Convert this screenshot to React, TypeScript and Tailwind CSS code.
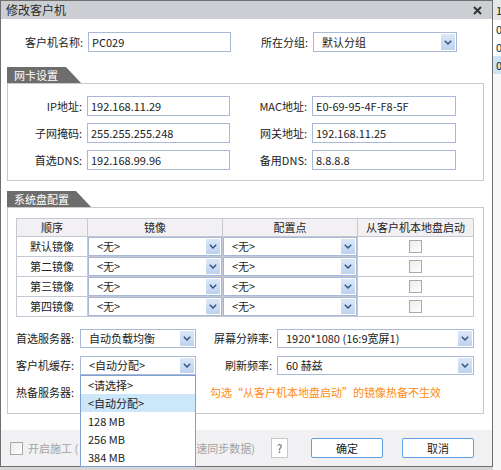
import React from 'react';

const Chevron = () => (
  <svg width="8" height="5" viewBox="0 0 8 5" className="block">
    <path d="M0.8 0.8 4 4 7.2 0.8" fill="none" stroke="#2f4f86" strokeWidth="1.4" />
  </svg>
);

const Select = ({ value, className = '' }: { value: string; className?: string }) => (
  <div className={`flex items-stretch border border-[#a7b9d6] bg-white p-px ${className}`}>
    <span className="flex flex-1 items-center truncate pl-[7px]">{value}</span>
    <span className="flex w-[14px] items-center justify-center bg-linear-to-b from-[#dbe7f6] to-[#bfd3ee]">
      <Chevron />
    </span>
  </div>
);

const Input = ({ value, className = '' }: { value: string; className?: string }) => (
  <div className={`flex h-[20px] items-center border border-[#a7b9d6] bg-white pl-[3px] ${className}`}>{value}</div>
);

const Check = () => (
  <div className="h-[13px] w-[13px] border border-[#a9a9a9] bg-linear-to-br from-[#ececec] to-white" />
);

const SectionTab = ({ title, w }: { title: string; w: string }) => (
  <div
    className={`h-[16px] ${w} bg-[#6d6d6d] pl-[7px] leading-[16px] text-white [clip-path:polygon(0_0,calc(100%-15px)_0,100%_100%,0_100%)]`}
  >
    {title}
  </div>
);

const images = ['默认镜像', '第二镜像', '第三镜像', '第四镜像'];
const cacheOptions = ['<请选择>', '<自动分配>', '128 MB', '256 MB', '384 MB'];

export default function App() {
  return (
    <div className="flex h-[470px] w-[501px] overflow-hidden bg-[#d6d6d6] font-['Noto_Sans_CJK_SC',sans-serif] text-[11px] text-[#222]">
      <div className="relative flex h-[467px] w-[493px] shrink-0 flex-col border border-[#6f6f6f] bg-white">
        {/* Title bar */}
        <div className="flex h-[18px] items-center justify-between bg-[#cbcfd4] pl-[5px] pr-[10px] text-[12px] text-[#2a2a2a]">
          <span>修改客户机</span>
          <svg width="9" height="9" viewBox="0 0 9 9">
            <path d="M1 1l7 7M8 1 1 8" stroke="#333" strokeWidth="2" />
          </svg>
        </div>

        {/* Row 1 */}
        <div className="mt-[13px] flex h-[20px] items-center">
          <span className="w-[87px] pr-[5px] text-right">客户机名称:</span>
          <Input value="PC029" className="w-[143px]" />
          <span className="w-[82px] pr-[5px] text-right">所在分组:</span>
          <Select value="默认分组" className="h-[20px] w-[144px]" />
        </div>

        {/* 网卡设置 */}
        <div className="ml-[6px] mt-[15px] w-[477px]">
          <SectionTab title="网卡设置" w="w-[74px]" />
          <div className="flex flex-col gap-[7px] border border-[#c9c9c9] pb-[10px] pt-[12px]">
            {[
              ['IP地址:', '192.168.11.29', 'MAC地址:', 'E0-69-95-4F-F8-5F'],
              ['子网掩码:', '255.255.255.248', '网关地址:', '192.168.11.25'],
              ['首选DNS:', '192.168.99.96', '备用DNS:', '8.8.8.8'],
            ].map(([l1, v1, l2, v2]) => (
              <div key={l1} className="flex h-[20px] items-center">
                <span className="w-[79px] pr-[5px] text-right">{l1}</span>
                <Input value={v1} className="w-[143px]" />
                <span className="w-[82px] pr-[5px] text-right">{l2}</span>
                <Input value={v2} className="w-[144px]" />
              </div>
            ))}
          </div>
        </div>

        {/* 系统盘配置 */}
        <div className="ml-[6px] mt-[10px] w-[477px]">
          <SectionTab title="系统盘配置" w="w-[84px]" />
          <div className="border border-[#c9c9c9] pb-[11px] pt-[10px]">
            <table className="ml-[8px] w-[457px] table-fixed border-collapse">
              <colgroup>
                <col className="w-[71px]" />
                <col className="w-[135px]" />
                <col className="w-[135px]" />
                <col className="w-[116px]" />
              </colgroup>
              <thead>
                <tr className="h-[18px] bg-[#f3f0f3]">
                  {['顺序', '镜像', '配置点', '从客户机本地盘启动'].map((h) => (
                    <th key={h} className="border border-[#c4c8d2] p-0 text-center font-normal">
                      {h}
                    </th>
                  ))}
                </tr>
              </thead>
              <tbody>
                {images.map((name) => (
                  <tr key={name} className="h-[20px]">
                    <td className="border border-[#c4c8d2] p-0 text-center">{name}</td>
                    <td className="border border-[#c4c8d2] p-0">
                      <Select value="<无>" className="h-[19px] w-full" />
                    </td>
                    <td className="border border-[#c4c8d2] p-0">
                      <Select value="<无>" className="h-[19px] w-full" />
                    </td>
                    <td className="border border-[#c4c8d2] p-0">
                      <div className="flex justify-center">
                        <Check />
                      </div>
                    </td>
                  </tr>
                ))}
              </tbody>
            </table>

            <div className="ml-[8px] mt-[12px] flex flex-col gap-[8px]">
              <div className="flex h-[19px] items-center">
                <span className="w-[64px]">首选服务器:</span>
                <Select value="自动负载均衡" className="h-[19px] w-[116px]" />
                <span className="w-[81px] pr-[5px] text-right">屏幕分辨率:</span>
                <Select value="1920*1080 (16:9宽屏1)" className="h-[19px] w-[197px]" />
              </div>
              <div className="flex h-[19px] items-center">
                <span className="w-[64px]">客户机缓存:</span>
                <Select value="<自动分配>" className="h-[19px] w-[116px]" />
                <span className="w-[81px] pr-[5px] text-right">刷新频率:</span>
                <Select value="60 赫兹" className="h-[19px] w-[197px]" />
              </div>
              <div className="flex h-[19px] items-center">
                <span className="w-[64px]">热备服务器:</span>
                <span className="ml-[130px] text-[#ff8a14]">勾选“从客户机本地盘启动”的镜像热备不生效</span>
              </div>
            </div>
          </div>
        </div>

        {/* Bottom bar */}
        <div className="mt-auto flex h-[36px] items-center bg-[#f1f0f2]">
          <div className="flex w-[270px] items-center pl-[9px]">
            <Check />
            <span className="ml-[5px] whitespace-nowrap text-[#a3a3a3]">开启施工 (</span>
            <span className="ml-[118px] whitespace-nowrap text-[#a3a3a3]">速同步数据)</span>
          </div>
          <div className="flex h-[20px] w-[17px] items-center justify-center border border-[#c8c8c8] bg-white text-[#555]">?</div>
          <button className="ml-[23px] h-[20px] w-[72px] rounded-[2px] border border-[#5f9fe3] bg-white">确定</button>
          <button className="ml-[19px] h-[20px] w-[72px] rounded-[2px] border border-[#5f9fe3] bg-white">取消</button>
        </div>

        {/* Open dropdown list */}
        <div className="absolute left-[79px] top-[374px] w-[116px] border border-[#7f9fcf] bg-white">
          {cacheOptions.map((o, i) => (
            <div key={o} className={`flex h-[18px] items-center pl-[7px] ${i === 1 ? 'bg-[#cce6fa]' : ''}`}>
              {o}
            </div>
          ))}
        </div>
      </div>

      {/* Window behind */}
      <div className="flex w-[8px] shrink-0 flex-col overflow-hidden bg-white">
        <div className="h-[20px] bg-[#e6e6e6] pl-[3px] leading-[20px]">1</div>
        <div className="h-[18px] pl-[3px] leading-[18px]">0</div>
        <div className="h-[18px] pl-[3px] leading-[18px]">0</div>
        <div className="h-[18px] bg-[#cde3f7] pl-[3px] leading-[18px]">0</div>
        <div className="flex-1 bg-[#f7f7f7]" />
      </div>
    </div>
  );
}
